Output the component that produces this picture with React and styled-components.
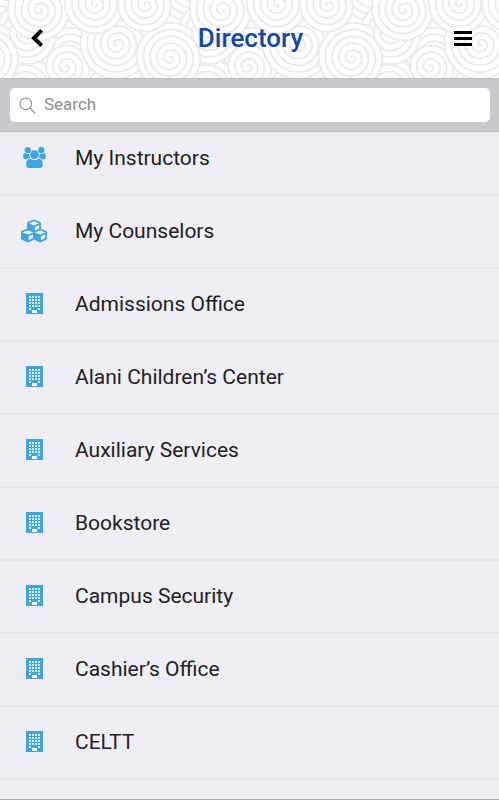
import React from "react";
import styled, { createGlobalStyle } from "styled-components";
import { FaCubes } from "react-icons/fa";

const GlobalStyle = createGlobalStyle`
  *, *::before, *::after { box-sizing: border-box; }
  body {
    margin: 0;
    background: #efeef4;
    font-family: Roboto, "Liberation Sans", sans-serif;
  }
`;

const Screen = styled.div`
  display: flex;
  flex-direction: column;
  height: 100vh;
  overflow: hidden;
  border-bottom: 1px solid #a9a8ae;
`;

const Header = styled.header`
  position: relative;
  flex: none;
  display: grid;
  grid-template-columns: 74px 1fr 72px;
  align-items: center;
  height: 78px;
  padding-bottom: 2px;
  background: #fff;
`;

const Pattern = styled.svg`
  position: absolute;
  inset: 0;
  width: 100%;
  height: 100%;
`;

const Title = styled.h1`
  position: relative;
  margin: 0;
  text-align: center;
  font-size: 26px;
  line-height: 32px;
  font-weight: 500;
  color: #1248a8;
`;

const IconButton = styled.button`
  position: relative;
  display: flex;
  align-items: center;
  justify-content: center;
  height: 48px;
  padding: 0;
  border: 0;
  background: none;
  color: #000;
  cursor: pointer;
`;

const SearchBar = styled.form`
  position: relative;
  z-index: 1;
  flex: none;
  padding: 9px 9px 9px 10px;
  background: #c9c8ce;
  border-top: 1px solid #bdbcc1;
  border-bottom: 1px solid #bdbcc1;
`;

const SearchField = styled.label`
  display: flex;
  align-items: center;
  gap: 8px;
  height: 34px;
  padding: 0 9px;
  border-radius: 5px;
  background: #fff;
  color: #8e8e93;
`;

const SearchInput = styled.input`
  flex: 1;
  min-width: 0;
  padding: 0 0 2px;
  border: 0;
  outline: 0;
  background: none;
  font-family: inherit;
  font-size: 17px;
  line-height: 24px;
  color: #222;
  &::placeholder { color: #8e8e93; opacity: 1; }
`;

const List = styled.ul`
  flex: 1;
  min-height: 0;
  margin: -9px 0 0;
  padding: 0;
  list-style: none;
  overflow: hidden;
`;

const Row = styled.li`
  border-bottom: 2px solid #e5e4e9;
`;

const RowLink = styled.a`
  display: grid;
  grid-template-columns: 68px 1fr;
  align-items: center;
  height: 71px;
  padding: 0 16px 2px 0;
  font-size: 21px;
  line-height: 28px;
  color: #222;
  text-decoration: none;
  column-gap: 7px;
`;

const RowIcon = styled.span`
  display: flex;
  justify-content: center;
  color: #3fa5e0;
`;

/* A swirl whose outer end lies at the angle endAngle. */
function spiral(cx, cy, radius, endAngle) {
  const turns = radius / 7;
  const steps = Math.round(turns * 24);
  let d = "";
  for (let i = 0; i <= steps; i += 1) {
    const t = i / steps;
    const angle = endAngle - (1 - t) * turns * Math.PI * 2;
    const r = 1 + (radius - 1) * t;
    d += `${i ? "L" : "M"}${(cx + r * Math.cos(angle)).toFixed(1)} ${(cy + r * Math.sin(angle)).toFixed(1)}`;
  }
  return d;
}

const TILE = 182;
const SWIRLS = [
  [11, -15, 40, -1.5],
  [69, 56, 38, 1],
  [128, 50, 38, 2],
  [157, 96, 25, 1],
  [24, 87, 33, 2],
  [28, 34, 34, -1],
  [66, 67, 25, 1.6],
  [117, 44, 38, -2],
  [170, 58, 36, -0.9],
  [40, 10, 34, -1.5],
  [96, 4, 33, -1.5],
  [146, 5, 30, -1.5],
];

function SwirlPattern() {
  return (
    <Pattern aria-hidden="true">
      <defs>
        <pattern id="swirls" width={TILE} height="90" patternUnits="userSpaceOnUse">
          {SWIRLS.map(([x, y, r, end]) =>
            [-TILE, 0, TILE].map((dx) => (
              <path
                key={`${x}-${y}-${dx}`}
                d={spiral(x + dx, y, r, end)}
                fill="#fff"
                stroke="#ececec"
                strokeWidth="2"
                strokeLinecap="round"
              />
            ))
          )}
        </pattern>
      </defs>
      <rect width="100%" height="100%" fill="url(#swirls)" />
    </Pattern>
  );
}

function PeopleIcon() {
  return (
    <svg width="23" height="21" viewBox="0 0 23 21" fill="currentColor" aria-hidden="true">
      <circle cx="4.700" cy="3.200" r="3.100" />
      <circle cx="18.300" cy="3.200" r="3.100" />
      <path d="M1.800 6C3.200 7 5 7.200 6.200 6.700c0 1.700.3 3 1.100 4.100-1.300.1-2.200.6-3 1.400H2.400C.9 12.200.2 11.400.2 10c0-2.200.5-4 1.600-4Z" />
      <path d="M21.200 6c-1.400 1-3.200 1.200-4.400.7 0 1.700-.3 3-1.100 4.100 1.300.1 2.200.6 3 1.400h1.900c1.500 0 2.200-.8 2.200-2.200 0-2.200-.5-4-1.600-4Z" />
      <circle cx="11.500" cy="7.700" r="4.400" />
      <path d="M7.300 11.800c2.500 1.900 5.900 1.900 8.400 0 2.900 0 4.100 2.600 4.100 5.900 0 2.100-1.200 3.300-3.200 3.300H6.400c-2 0-3.200-1.200-3.200-3.300 0-3.300 1.200-5.900 4.100-5.900Z" />
    </svg>
  );
}

function BuildingIcon() {
  return (
    <svg width="17" height="21" viewBox="0 0 17 21" aria-hidden="true">
      <rect width="17" height="21" fill="currentColor" />
      <g fill="#d9edf9">
        {[3, 6, 9, 12].map((y) =>
          [3, 6, 9, 12].map((x) => <rect key={`${x}-${y}`} x={x} y={y} width="2" height="2" />)
        )}
        <rect x="3" y="15" width="2" height="2" />
        <rect x="12" y="15" width="2" height="2" />
        <rect x="6" y="17" width="5" height="3" fill="#fff" />
      </g>
    </svg>
  );
}

const ENTRIES = [
  ["My Instructors", "people"],
  ["My Counselors", "cubes"],
  ["Admissions Office", "building"],
  ["Alani Children’s Center", "building"],
  ["Auxiliary Services", "building"],
  ["Bookstore", "building"],
  ["Campus Security", "building"],
  ["Cashier’s Office", "building"],
  ["CELTT", "building"],
];

const ICONS = {
  people: <PeopleIcon />,
  cubes: <FaCubes size={26} aria-hidden="true" />,
  building: <BuildingIcon />,
};

export default function App() {
  return (
    <Screen>
      <GlobalStyle />
      <Header>
        <SwirlPattern />
        <IconButton type="button" aria-label="Back">
          <svg width="12" height="20" viewBox="0 0 12 20" fill="none" stroke="currentColor" strokeWidth="4" aria-hidden="true">
            <path d="M10.600 2.300 3 10l7.600 7.700" />
          </svg>
        </IconButton>
        <Title>Directory</Title>
        <IconButton type="button" aria-label="Menu">
          <svg width="18" height="16" viewBox="0 0 18 16" fill="currentColor" aria-hidden="true">
            <path d="M0 1h18v3H0zM0 7h18v3H0zM0 13h18v3H0z" />
          </svg>
        </IconButton>
      </Header>
      <SearchBar role="search">
        <SearchField>
          <svg width="17" height="17" viewBox="0 0 17 17" fill="none" stroke="currentColor" strokeWidth="1.200" aria-hidden="true">
            <circle cx="6.800" cy="6.800" r="5.800" />
            <path d="m11 11 5.300 5.300" />
          </svg>
          <SearchInput type="search" placeholder="Search" aria-label="Search" />
        </SearchField>
      </SearchBar>
      <List>
        {ENTRIES.map(([name, icon]) => (
          <Row key={name}>
            <RowLink href="#">
              <RowIcon>{ICONS[icon]}</RowIcon>
              {name}
            </RowLink>
          </Row>
        ))}
      </List>
    </Screen>
  );
}
